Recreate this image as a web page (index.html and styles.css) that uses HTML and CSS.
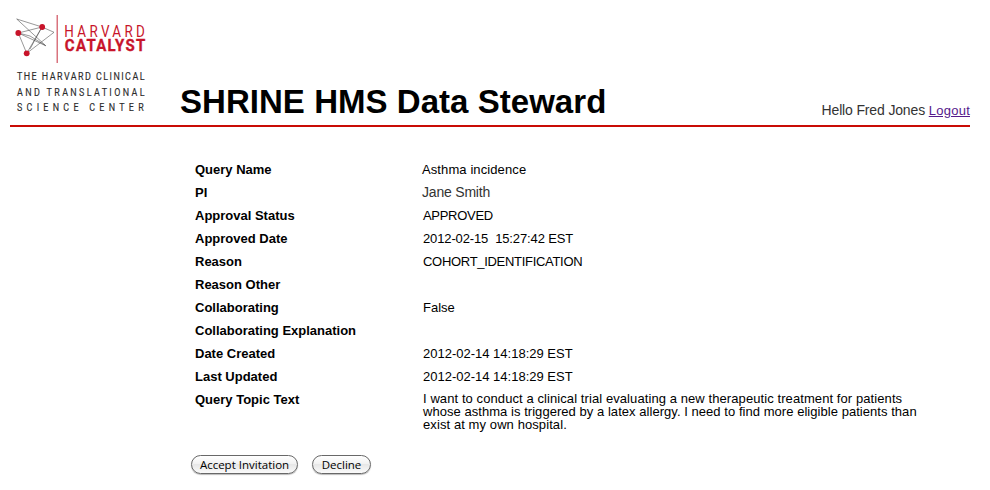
FILE: index.html
```html
<!DOCTYPE html>
<html lang="en">
<head>
<meta charset="utf-8">
<title>SHRINE HMS Data Steward</title>
<link rel="stylesheet" href="styles.css">
</head>
<body>
<header class="header">
  <svg class="logo" width="140" height="105" viewBox="10 10 140 105" role="img" aria-label="Harvard Catalyst">
    <path class="mesh" d="M45.7 45.7L16.7 19L42 27L54 32.3L26.7 53.3L18.3 33L42 27M18.3 33L45.7 45.7L30 36L18.3 33M42 27L26.7 53.3M42 27L30 49"/>
    <circle class="node" cx="18.3" cy="33" r="2.9"/>
    <circle class="node" cx="42.2" cy="27" r="2.9"/>
    <circle class="node" cx="26.7" cy="53.3" r="2.9"/>
    <path class="rule" d="M57.2 15V63"/>
    <text class="brand" transform="translate(64.3 36.5) scale(.84 1)" textLength="96">HARVARD</text>
    <text class="brand brand-bold" transform="translate(64.8 51.3) scale(.88 1)" textLength="91.5">CATALYST</text>
    <text class="tag" transform="translate(17 80) scale(.85 1)" textLength="150">THE HARVARD CLINICAL</text>
    <text class="tag" transform="translate(17 95.5) scale(.85 1)" textLength="150">AND TRANSLATIONAL</text>
    <text class="tag" transform="translate(17 111) scale(.85 1)" textLength="149">SCIENCE CENTER</text>
  </svg>
  <h1>SHRINE HMS Data Steward</h1>
  <div class="user">Hello Fred Jones <a href="#">Logout</a></div>
</header>
<main>
  <dl class="details">
    <dt>Query Name</dt><dd class="near asthma">Asthma incidence</dd>
    <dt>PI</dt><dd class="near pi">Jane Smith</dd>
    <dt>Approval Status</dt><dd class="status">APPROVED</dd>
    <dt>Approved Date</dt><dd class="date">2012-02-15&nbsp; 15:27:42 EST</dd>
    <dt>Reason</dt><dd class="reason">COHORT_IDENTIFICATION</dd>
    <dt>Reason Other</dt><dd></dd>
    <dt>Collaborating</dt><dd>False</dd>
    <dt>Collaborating Explanation</dt><dd></dd>
    <dt>Date Created</dt><dd>2012-02-14 14:18:29 EST</dd>
    <dt>Last Updated</dt><dd>2012-02-14 14:18:29 EST</dd>
    <dt>Query Topic Text</dt><dd class="topic"><span class="first">I want to conduct a clinical trial evaluating a new therapeutic treatment for patients</span><br><span class="second">whose asthma is triggered by a latex allergy. I need to find more eligible patients than</span><br><span class="third">exist at my own hospital.</span></dd>
  </dl>
  <div class="actions"><button class="accept">Accept Invitation</button><button class="decline">Decline</button></div>
</main>
</body>
</html>
```

FILE: styles.css
```css
* { box-sizing: border-box; }
body { margin: 0; padding: 10px; background: #fff; color: #000; font: 13px/23px "Liberation Sans", Arial, sans-serif; }
.header { display: flex; align-items: flex-end; width: 960px; height: 117px; border-bottom: 2px solid #c90c05; }
.logo { align-self: flex-start; flex: none; }
.mesh { fill: none; stroke: #444; stroke-width: .55; }
.node { fill: #c8142a; }
.rule { stroke: #d0505e; stroke-width: 1.2; }
.brand { font: 16px "Roboto", sans-serif; fill: #c8142a; }
.brand-bold { font-size: 17px; font-weight: 700; stroke: #c8142a; stroke-width: .35; }
.tag { font: 10.5px "Roboto", sans-serif; fill: #2c2c2c; stroke: #2c2c2c; stroke-width: .15; }
h1 { margin: 0 0 5px 30px; font-size: 33px; line-height: 36px; letter-spacing: .04px; white-space: nowrap; }
.user { margin: 0 0 3px auto; font-size: 14px; color: #333; letter-spacing: -.15px; }
.user a { font-size: 13px; color: #551a8b; letter-spacing: .25px; }
.details { display: grid; grid-template-columns: 228px 520px; grid-auto-rows: 23px; margin: 31px 0 0 185px; }
dt { font-weight: 700; }
dd { margin: 0; white-space: nowrap; }
.near { margin-left: -1px; }
.asthma { letter-spacing: .1px; }
.pi { font-size: 14px; color: #333; letter-spacing: -.2px; }
.status { letter-spacing: -.3px; }
.date { letter-spacing: -.13px; }
.reason { letter-spacing: -.3px; }
.topic { padding-top: 4px; line-height: 13px; }
.first { letter-spacing: .085px; }
.second { letter-spacing: .045px; }
.third { letter-spacing: .09px; }
.actions { display: flex; gap: 14px; margin: 44px 0 0 181px; }
button { height: 19px; padding: 0; border: 1px solid #686868; border-radius: 10px; background: linear-gradient(#fff, #f2f2f2 45%, #e7e7e7 50%, #fafafa); box-shadow: 0 1px 1px #bbb; color: #000; font: 11.5px/16px "Open Sans", sans-serif; white-space: nowrap; }
.accept { width: 107px; }
.decline { width: 59px; }
```
